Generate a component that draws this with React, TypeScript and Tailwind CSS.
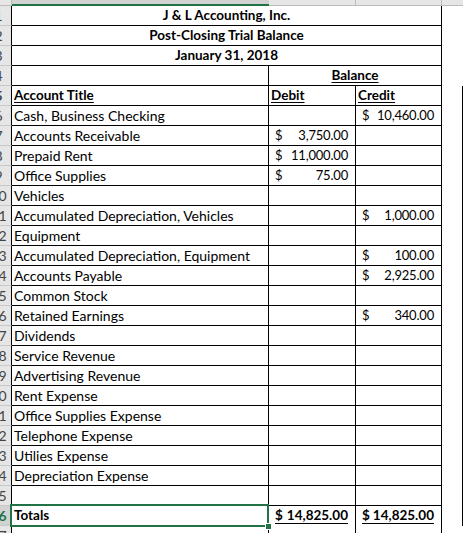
const GREEN = "#217346";

type Row = {
  n: number;
  a?: string;
  b?: string;
  c?: string;
};

const body: Row[] = [
  { n: 6, a: "Cash, Business Checking", c: "10,460.00" },
  { n: 7, a: "Accounts Receivable", b: "3,750.00" },
  { n: 8, a: "Prepaid Rent", b: "11,000.00" },
  { n: 9, a: "Office Supplies", b: "75.00" },
  { n: 10, a: "Vehicles" },
  { n: 11, a: "Accumulated Depreciation, Vehicles", c: "1,000.00" },
  { n: 12, a: "Equipment" },
  { n: 13, a: "Accumulated Depreciation, Equipment", c: "100.00" },
  { n: 14, a: "Accounts Payable", c: "2,925.00" },
  { n: 15, a: "Common Stock" },
  { n: 16, a: "Retained Earnings", c: "340.00" },
  { n: 17, a: "Dividends" },
  { n: 18, a: "Service Revenue" },
  { n: 19, a: "Advertising Revenue" },
  { n: 20, a: "Rent Expense" },
  { n: 21, a: "Office Supplies Expense" },
  { n: 22, a: "Telephone Expense" },
  { n: 23, a: "Utilies Expense" },
  { n: 24, a: "Depreciation Expense" },
  { n: 25 },
];

const RowHead = ({ n, active }: { n: number; active?: boolean }) => (
  <div
    className={`w-[12px] shrink-0 overflow-hidden border-r border-b border-r-black border-b-[#c8c8c8] text-[14px] ${
      active ? "bg-[#d2d2d2] text-[#217346]" : "bg-[#e6e6e6] text-[#444]"
    }`}
  >
    <div className="ml-[-14px] w-[25px] text-center leading-[19px]">{n}</div>
  </div>
);

const Money = ({ v }: { v?: string }) =>
  v ? (
    <div className="flex justify-between pl-[6px] pr-[7px] text-[13px] tracking-[-0.2px] leading-[19px]">
      <span>$</span>
      <span>{v}</span>
    </div>
  ) : null;

export default function App() {
  return (
    <div className="w-[463px] h-[533px] overflow-hidden bg-white text-black text-[14px] font-['Lato',sans-serif]">
      {/* column headers, only their bottom edge shows */}
      <div className="flex h-[6px] text-[#444] text-[14px]">
        <div className="w-[12px] shrink-0 bg-[#e6e6e6] border-r border-b border-[#bcbcbc]" />
        <div className="w-[257px] shrink-0 overflow-hidden bg-[#d2d2d2] border-b-2 border-[#217346]">
          <div className="mt-[-15px] leading-[20px] text-center">A</div>
        </div>
        <div className="w-[87px] shrink-0 overflow-hidden bg-[#e6e6e6] border-r border-b border-[#bcbcbc]">
          <div className="mt-[-15px] leading-[20px] text-center">B</div>
        </div>
        <div className="w-[86px] shrink-0 overflow-hidden bg-[#e6e6e6] border-r border-b border-[#bcbcbc]">
          <div className="mt-[-15px] leading-[20px] text-center">C</div>
        </div>
        <div className="flex-1 overflow-hidden bg-[#e6e6e6] border-b border-[#bcbcbc]">
          <div className="mt-[-15px] leading-[20px] text-center">D</div>
        </div>
      </div>

      {["J & L Accounting, Inc.", "Post-Closing Trial Balance", "January 31, 2018"].map((t, i) => (
        <div key={t} className="flex h-[20px]">
          <RowHead n={i + 1} />
          <div className="w-[430px] shrink-0 border-r border-b border-black text-center text-[13.5px] font-bold leading-[19px]">
            {t}
          </div>
          <div className="flex-1" />
        </div>
      ))}

      <div className="flex h-[20px]">
        <RowHead n={4} />
        <div className="w-[257px] shrink-0 border-r border-b border-black" />
        <div className="w-[173px] shrink-0 border-r border-b border-black text-center text-[13.5px] font-bold leading-[19px]">
          <span className="underline underline-offset-2">Balance</span>
        </div>
        <div className="flex-1" />
      </div>

      <div className="flex h-[20px] text-[13.5px] font-bold leading-[19px]">
        <RowHead n={5} />
        <div className="w-[257px] shrink-0 border-r border-b border-black pl-[2px]">
          <span className="underline underline-offset-2">Account Title</span>
        </div>
        <div className="w-[87px] shrink-0 border-r border-b border-black pl-[2px]">
          <span className="underline underline-offset-2">Debit</span>
        </div>
        <div className="w-[86px] shrink-0 border-r border-b border-black pl-[2px]">
          <span className="underline underline-offset-2">Credit</span>
        </div>
        <div className="flex-1 border-r border-black" />
      </div>

      {body.map((r) => (
        <div key={r.n} className="flex h-[20px]">
          <RowHead n={r.n} />
          <div className="w-[257px] shrink-0 border-r border-b border-black pl-[2px] leading-[19px] whitespace-nowrap">
            {r.a}
          </div>
          <div className="w-[87px] shrink-0 border-r border-b border-black">
            <Money v={r.b} />
          </div>
          <div className="w-[86px] shrink-0 border-r border-b border-black">
            <Money v={r.c} />
          </div>
          <div className="flex-1 border-r border-black" />
        </div>
      ))}

      {/* totals, A26 is the selected cell */}
      <div className="flex h-[20px] text-[13.5px] font-bold">
        <RowHead n={26} active />
        <div className="relative w-[257px] shrink-0 border-r border-b border-black pl-[2px] leading-[19px]">
          Totals
          <div className="absolute left-[-2px] top-[-2px] right-[-1px] bottom-[-2px] border-2" style={{ borderColor: GREEN }} />
          <div className="absolute right-[-4px] bottom-[-5px] w-[7px] h-[7px] bg-[#217346] border border-white" />
        </div>
        {["14,825.00", "14,825.00"].map((v, i) => (
          <div key={i} className={`${i === 0 ? "w-[87px]" : "w-[86px]"} shrink-0 border-r border-black`}>
            <div className="ml-[6px] mr-[7px] h-[18px] flex justify-between border-b border-black leading-[18px]">
              <span>$</span>
              <span>{v}</span>
            </div>
          </div>
        ))}
        <div className="flex-1 border-r border-black" />
      </div>

      <div className="flex h-[20px]">
        <RowHead n={27} />
        <div className="w-[257px] shrink-0 border-r border-black" />
        <div className="w-[87px] shrink-0 border-r border-black" />
        <div className="w-[86px] shrink-0 border-r border-black" />
        <div className="flex-1" />
      </div>
    </div>
  );
}
